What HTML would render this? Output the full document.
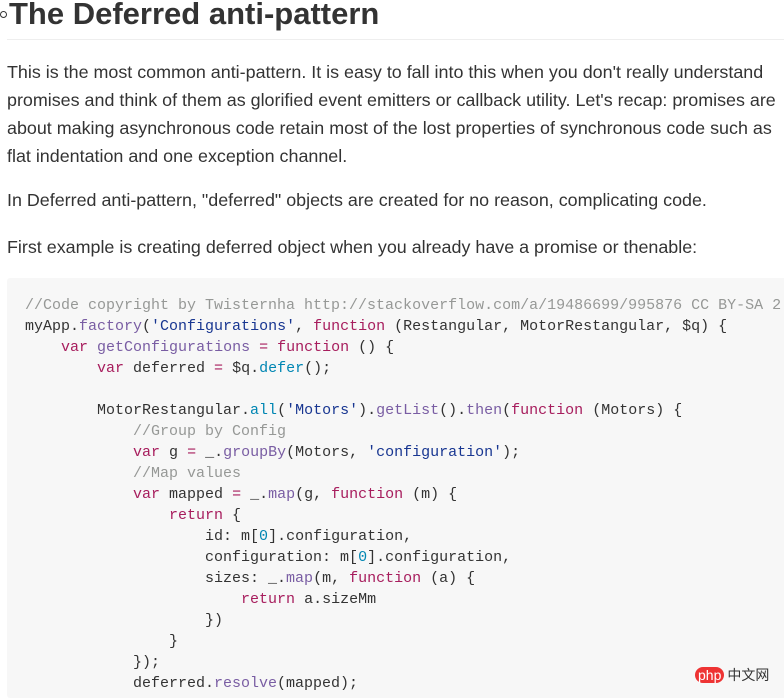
<!DOCTYPE html>
<html><head><meta charset="utf-8"><style>
body{margin:0;background:#fff;width:784px;height:678px;overflow:hidden;position:relative;font-family:"Liberation Sans",Arial,sans-serif;color:#333}
h1{position:absolute;left:9px;top:-6px;margin:0;font-size:31px;line-height:40px;font-weight:bold;color:#333;white-space:nowrap}
.anchor{position:absolute;left:0;top:11px;width:5px;height:5px;border:1px solid #333;border-radius:50%}
.hr{position:absolute;left:7px;right:0;top:39px;border-top:1px solid #eee}
.p{position:absolute;left:7px;font-size:17.9px;line-height:28px;white-space:nowrap}
pre{position:absolute;left:7px;top:278px;width:800px;height:420px;margin:0;background:#f7f7f7;border-radius:3px;padding:17px 0 0 18px;box-sizing:border-box;font-family:"Liberation Mono",monospace;font-size:15px;line-height:21px;color:#333}
.c{color:#969896}.k{color:#a71d5d}.f{color:#795da3}.b{color:#0086b3}.s{color:#183691}
.wm{position:absolute;left:695px;top:665px;font-size:14px;color:#333}
.wm span{background:#e33;color:#fff;border-radius:8px;padding:0 3px;margin-right:3px}
</style></head><body>
<div class="anchor"></div>
<h1>The Deferred anti-pattern</h1>
<div class="hr"></div>
<div class="p" style="top:58px">This is the most common anti-pattern. It is easy to fall into this when you don't really understand<br>promises and think of them as glorified event emitters or callback utility. Let's recap: promises are<br>about making asynchronous code retain most of the lost properties of synchronous code such as<br>flat indentation and one exception channel.</div>
<div class="p" style="top:186px">In Deferred anti-pattern, "deferred" objects are created for no reason, complicating code.</div>
<div class="p" style="top:233px">First example is creating deferred object when you already have a promise or thenable:</div>
<pre><span class="c">//Code copyright by Twisternha http://stackoverflow.com/a/19486699/995876 CC BY-SA 2</span>
myApp.<span class="f">factory</span>(<span class="s">'Configurations'</span>, <span class="k">function</span> (Restangular, MotorRestangular, $q) {
    <span class="k">var</span> <span class="f">getConfigurations</span> <span class="k">=</span> <span class="k">function</span> () {
        <span class="k">var</span> deferred <span class="k">=</span> $q.<span class="b">defer</span>();

        MotorRestangular.<span class="b">all</span>(<span class="s">'Motors'</span>).<span class="f">getList</span>().<span class="f">then</span>(<span class="k">function</span> (Motors) {
            <span class="c">//Group by Config</span>
            <span class="k">var</span> g <span class="k">=</span> _.<span class="f">groupBy</span>(Motors, <span class="s">'configuration'</span>);
            <span class="c">//Map values</span>
            <span class="k">var</span> mapped <span class="k">=</span> _.<span class="f">map</span>(g, <span class="k">function</span> (m) {
                <span class="k">return</span> {
                    id: m[<span class="b">0</span>].configuration,
                    configuration: m[<span class="b">0</span>].configuration,
                    sizes: _.<span class="f">map</span>(m, <span class="k">function</span> (a) {
                        <span class="k">return</span> a.sizeMm
                    })
                }
            });
            deferred.<span class="f">resolve</span>(mapped);
</pre>
<div class="wm"><span>php</span>中文网</div>
</body></html>
